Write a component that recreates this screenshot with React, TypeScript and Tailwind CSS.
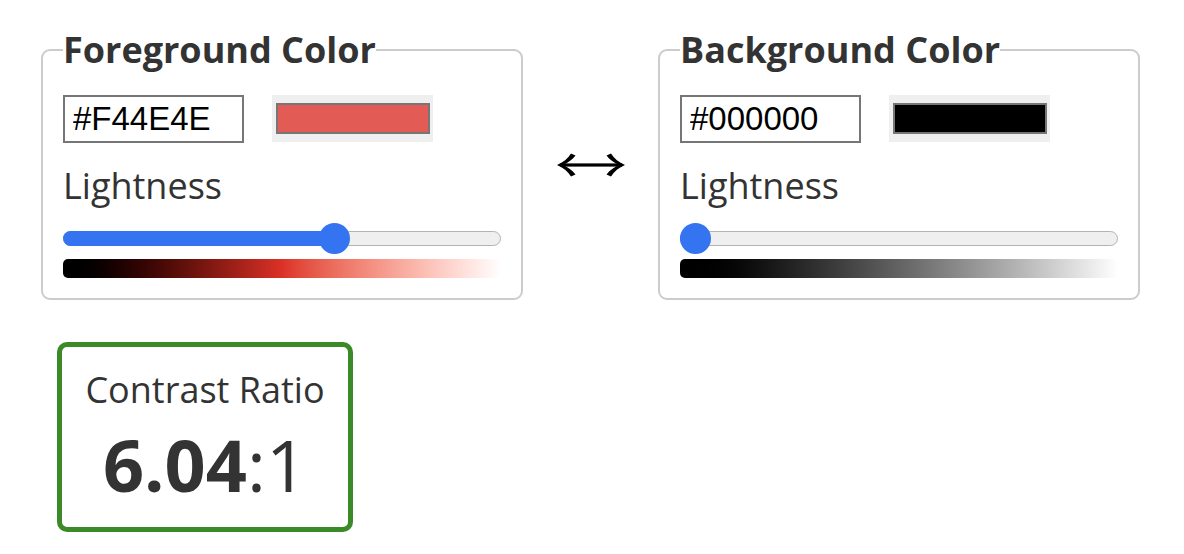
import React from "react";

type FieldProps = {
  title: string;
  hex: string;
  swatchClass: string;
  value: number;
  gradientClass: string;
};

function ColorField({ title, hex, swatchClass, value, gradientClass }: FieldProps) {
  const trackW = 438;
  const thumb = 31;
  const center = thumb / 2 + value * (trackW - thumb);
  return (
    <fieldset className="w-[482px] shrink-0 rounded-[9px] border-2 border-[#cccccc] px-[20px] pt-[21px] pb-[20px]">
      <legend className="p-0 text-[36px] font-bold leading-[49px] text-[#333333]">{title}</legend>
      <div className="flex items-start gap-[28px]">
        <input
          readOnly
          value={hex}
          className="h-[48px] w-[181px] border-2 border-[#767676] bg-white pl-[8px] text-[33px] text-black outline-none [font-family:'Liberation_Sans',Arial,sans-serif]"
        />
        <div className="flex h-[47px] w-[161px] bg-[#efefef] pt-[8px] pb-[8px] pl-[4px] pr-[3px]">
          <div className={`h-full w-full border-2 border-[#767676] ${swatchClass}`} />
        </div>
      </div>
      <div className="mt-[18px] text-[36px] leading-[49px] text-[#333333]">Lightness</div>
      <div className="relative mt-[13px] h-[31px] w-full">
        <div className="absolute left-0 right-0 top-[8px] h-[15px] rounded-full border-[1.5px] border-[#b3b3b3] bg-[#efefef]" />
        <div
          className="absolute left-0 top-[8px] h-[15px] rounded-l-full bg-[#3574f0]"
          style={{ width: center }}
        />
        <div
          className="absolute top-0 h-[31px] w-[31px] rounded-full bg-[#3574f0]"
          style={{ left: center - thumb / 2 }}
        />
      </div>
      <div className={`mt-[5px] h-[19px] w-full rounded-[5px] ${gradientClass}`} />
    </fieldset>
  );
}

function Arrow() {
  return (
    <svg width="68" height="24" viewBox="0 0 68 24" fill="#000">
      <rect x="3" y="10.4" width="62" height="3.2" />
      <path d="M0 12 C6 9.5 11 5.5 14 0.5 L18.5 2.5 C15.5 6.5 10.5 10 6 12 C10.5 14 15.5 17.5 18.5 21.5 L14 23.5 C11 18.5 6 14.5 0 12 Z" />
      <path d="M68 12 C62 9.5 57 5.5 54 0.5 L49.5 2.5 C52.5 6.5 57.5 10 62 12 C57.5 14 52.5 17.5 49.5 21.5 L54 23.5 C57 18.5 62 14.5 68 12 Z" />
    </svg>
  );
}

export default function App() {
  return (
    <div className="min-h-[554px] w-[1184px] bg-white pl-[41px] pt-[25px] text-[#333333] [font-family:'Open_Sans',sans-serif]">
      <div className="flex items-start">
        <ColorField
          title="Foreground Color"
          hex="#F44E4E"
          swatchClass="bg-[#e25b55]"
          value={0.63}
          gradientClass="bg-linear-to-r from-[#000000] via-[#dc3126] to-[#ffffff]"
        />
        <div className="mt-[128px] flex w-[135px] shrink-0 justify-center">
          <Arrow />
        </div>
        <ColorField
          title="Background Color"
          hex="#000000"
          swatchClass="bg-[#000000]"
          value={0}
          gradientClass="bg-linear-to-r from-[#000000] to-[#ffffff]"
        />
      </div>
      <div className="ml-[16px] mt-[42px] flex h-[190px] w-[296px] flex-col items-center rounded-[10px] border-[5px] border-[#3b8a28] pt-[18px]">
        <div className="text-[36px] leading-[49px]">Contrast Ratio</div>
        <div className="mt-[1px] text-[72px] leading-[98px]">
          <span className="font-bold">6.04</span>
          <span>:1</span>
        </div>
      </div>
    </div>
  );
}
